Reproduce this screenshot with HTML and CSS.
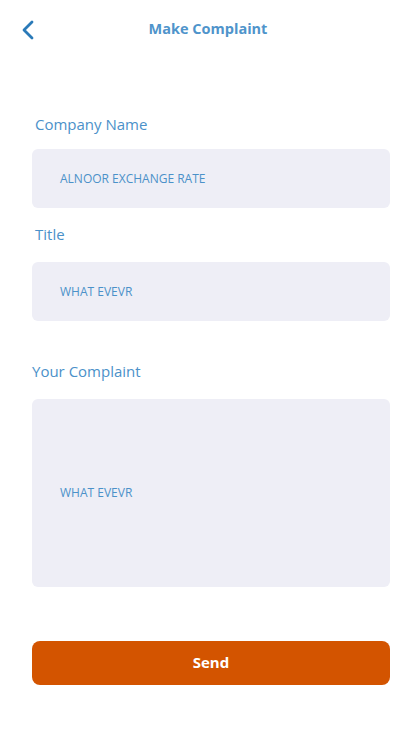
FILE: index.html
```html
<!DOCTYPE html>
<html lang="en">
<head>
<meta charset="utf-8">
<title>Make Complaint</title>
<link rel="stylesheet" href="styles.css">
</head>
<body>
<div class="screen">
  <header class="header">
    <button class="back" aria-label="Back">
      <svg width="14" height="20" viewBox="0 0 14 20"><path d="M11 2 L3 10 L11 18" fill="none" stroke="#2a7ab8" stroke-width="2.8" stroke-linecap="round" stroke-linejoin="round"/></svg>
    </button>
    <h1 class="title">Make Complaint</h1>
  </header>
  <main class="form">
    <label class="label label-indent label-first">Company Name</label>
    <div class="field">ALNOOR EXCHANGE RATE</div>
    <label class="label label-indent label-second">Title</label>
    <div class="field">WHAT EVEVR</div>
    <label class="label label-third">Your Complaint</label>
    <div class="field field-area">WHAT EVEVR</div>
    <button class="send">Send</button>
  </main>
</div>
</body>
</html>
```
FILE: styles.css
```css
* { box-sizing: border-box; }
html, body { margin: 0; padding: 0; background: #ffffff; }
body { font-family: "Open Sans", "Lato", sans-serif; }
.screen { width: 414px; min-height: 734px; }
.header {
  height: 58px;
  display: flex;
  align-items: center;
  justify-content: center;
  position: relative;
}
.back {
  position: absolute;
  left: 20px;
  top: 20px;
  border: 0;
  background: none;
  padding: 0;
  width: 16px;
  height: 20px;
  display: flex;
  align-items: center;
  justify-content: center;
}
.title {
  margin: 0 0 1px 2px;
  font-size: 14.5px;
  font-weight: 700;
  color: #4f94cb;
}
.form {
  display: flex;
  flex-direction: column;
  padding: 0 24px 0 32px;
}
.label {
  font-size: 15px;
  line-height: 20px;
  color: #4b91c9;
  font-weight: 400;
  padding-bottom: 2px;
}
.label-indent { padding-left: 3px; }
.label-first { margin-top: 56px; margin-bottom: 13px; }
.label-second { margin-top: 16px; margin-bottom: 16px; }
.label-third { margin-top: 40px; margin-bottom: 16px; }
.field {
  height: 59px;
  background: #eeeef6;
  border-radius: 6px;
  padding-left: 28px;
  padding-bottom: 1px;
  display: flex;
  align-items: center;
  font-size: 12px;
  color: #4b91c9;
  text-transform: uppercase;
}
.field-area { height: 188px; }
.send {
  margin-top: 54px;
  height: 44px;
  border: 0;
  border-radius: 8px;
  background: #d35400;
  color: #ffffff;
  font-family: inherit;
  font-size: 15px;
  font-weight: 700;
  padding: 0 0 2px 0;
}
```
